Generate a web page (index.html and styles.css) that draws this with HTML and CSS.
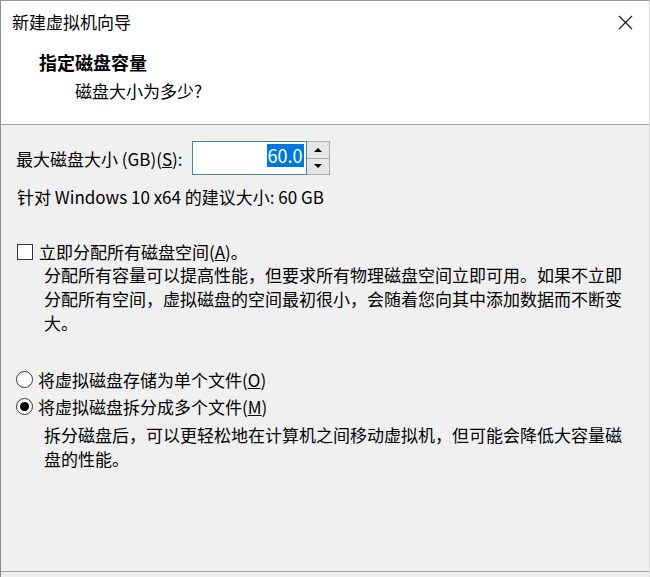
FILE: index.html
```html
<!DOCTYPE html>
<html lang="zh-CN">
<head>
<meta charset="utf-8">
<title>新建虚拟机向导</title>
<link rel="stylesheet" href="styles.css">
</head>
<body>
<div class="window">
  <div class="titlebar">
    <span class="title">新建虚拟机向导</span>
    <span class="close">
      <svg width="15" height="15" viewBox="0 0 15 15"><path d="M1 1 L14 14 M14 1 L1 14" stroke="#1a1a1a" stroke-width="1.2" fill="none"/></svg>
    </span>
  </div>
  <div class="header">
    <div class="heading">指定磁盘容量</div>
    <div class="subheading">磁盘大小为多少?</div>
  </div>
  <div class="content">
    <div class="size-row">
      <span class="label">最大磁盘大小 (GB)(<u>S</u>):</span>
      <div class="spin">
        <div class="spin-input"><span class="sel">60.0</span></div>
        <div class="spin-buttons">
          <div class="spin-btn"><span class="tri-up"></span></div>
          <div class="spin-btn"><span class="tri-down"></span></div>
        </div>
      </div>
    </div>
    <div class="hint">针对 Windows 10 x64 的建议大小: 60 GB</div>
    <div class="check-row">
      <span class="checkbox"></span>
      <span class="opt-label c">立即分配所有磁盘空间(<u>A</u>)。</span>
    </div>
    <p class="desc">分配所有容量可以提高性能，但要求所有物理磁盘空间立即可用。如果不立即<br>分配所有空间，虚拟磁盘的空间最初很小，会随着您向其中添加数据而不断变<br>大。</p>
    <div class="radio-row first">
      <span class="radio"></span>
      <span class="opt-label r">将虚拟磁盘存储为单个文件(<u>O</u>)</span>
    </div>
    <div class="radio-row">
      <span class="radio checked"></span>
      <span class="opt-label r">将虚拟磁盘拆分成多个文件(<u>M</u>)</span>
    </div>
    <p class="desc two">拆分磁盘后，可以更轻松地在计算机之间移动虚拟机，但可能会降低大容量磁<br>盘的性能。</p>
  </div>
  <div class="footer"></div>
</div>
</body>
</html>
```

FILE: styles.css
```css
html, body {
  margin: 0;
  padding: 0;
  background: #f0f0f0;
}
body {
  font-family: "Noto Sans CJK SC", "Noto Sans", sans-serif;
  font-size: 17px;
  color: #000;
}
.window {
  width: 650px;
  height: 577px;
  box-sizing: border-box;
  border-left: 1px solid #8c8c8c;
  border-top: 1px solid #9a9a9a;
  border-right: 1px solid #d8d8d8;
  display: flex;
  flex-direction: column;
  background: #f0f0f0;
}
.titlebar {
  height: 42px;
  background: #fff;
  display: flex;
  align-items: center;
  justify-content: space-between;
  padding-left: 11px;
  padding-right: 16px;
}
.title {
  font-size: 17px;
  line-height: 24px;
}
.close {
  display: flex;
  width: 15px;
  height: 15px;
}
.header {
  background: #fff;
  height: 82px;
  box-sizing: border-box;
  padding-top: 7px;
  padding-left: 38px;
  border-bottom: 1px solid #a0a0a0;
}
.heading {
  font-size: 18px;
  font-weight: bold;
  line-height: 24px;
}
.subheading {
  font-size: 17px;
  line-height: 24px;
  margin-top: 5px;
  padding-left: 36px;
}
.content {
  flex: 1;
  padding-left: 15px;
}
.size-row {
  display: flex;
  align-items: center;
  margin-top: 16px;
  height: 34px;
}
.label {
  line-height: 24px;
  margin-top: 2px;
}
.spin {
  display: flex;
  margin-left: 9px;
  height: 34px;
}
.spin-input {
  width: 115px;
  height: 34px;
  box-sizing: border-box;
  border: 1px solid #4b7fb0;
  background: #fff;
  display: flex;
  justify-content: flex-end;
  align-items: flex-start;
  padding-top: 2px;
  padding-right: 2px;
}
.sel {
  background: #0078d7;
  color: #fff;
  font-size: 18px;
  line-height: 23px;
  padding: 0 1px;
}
.spin-buttons {
  width: 23px;
  height: 34px;
  box-sizing: border-box;
  border: 1px solid #adadad;
  border-left: none;
  display: flex;
  flex-direction: column;
}
.spin-btn {
  flex: 1;
  background: #e5e5e5;
  display: flex;
  align-items: center;
  justify-content: center;
}
.spin-btn + .spin-btn {
  border-top: 1px solid #adadad;
}
.tri-up {
  width: 0;
  height: 0;
  border-left: 4px solid transparent;
  border-right: 4px solid transparent;
  border-bottom: 4px solid #000;
}
.tri-down {
  width: 0;
  height: 0;
  border-left: 4px solid transparent;
  border-right: 4px solid transparent;
  border-top: 4px solid #000;
}
.hint {
  line-height: 24px;
  margin-top: 10px;
  padding-left: 1px;
}
.check-row {
  display: flex;
  align-items: center;
  margin-top: 32px;
  height: 22px;
}
.checkbox {
  width: 16px;
  height: 16px;
  box-sizing: border-box;
  border: 1px solid #333;
  background: #fff;
  margin-left: 1px;
}
.opt-label {
  line-height: 24px;
  margin-left: 6px;
}
.opt-label.c {
  line-height: 22px;
}
.opt-label.r {
  margin-left: 5px;
}
.desc {
  margin: 0;
  padding-left: 28px;
  line-height: 24px;
  white-space: nowrap;
}
.radio-row {
  display: flex;
  align-items: center;
  height: 27px;
}
.radio-row.first {
  margin-top: 31px;
}
.radio {
  width: 17px;
  height: 17px;
  box-sizing: border-box;
  border: 1px solid #333;
  border-radius: 50%;
  background: #fff;
  display: flex;
  align-items: center;
  justify-content: center;
}
.radio.checked::after {
  content: "";
  width: 9px;
  height: 9px;
  border-radius: 50%;
  background: #000;
}
.desc.two {
  margin-top: 3px;
}
.footer {
  height: 5px;
  border-top: 1px solid #a0a0a0;
}
```
